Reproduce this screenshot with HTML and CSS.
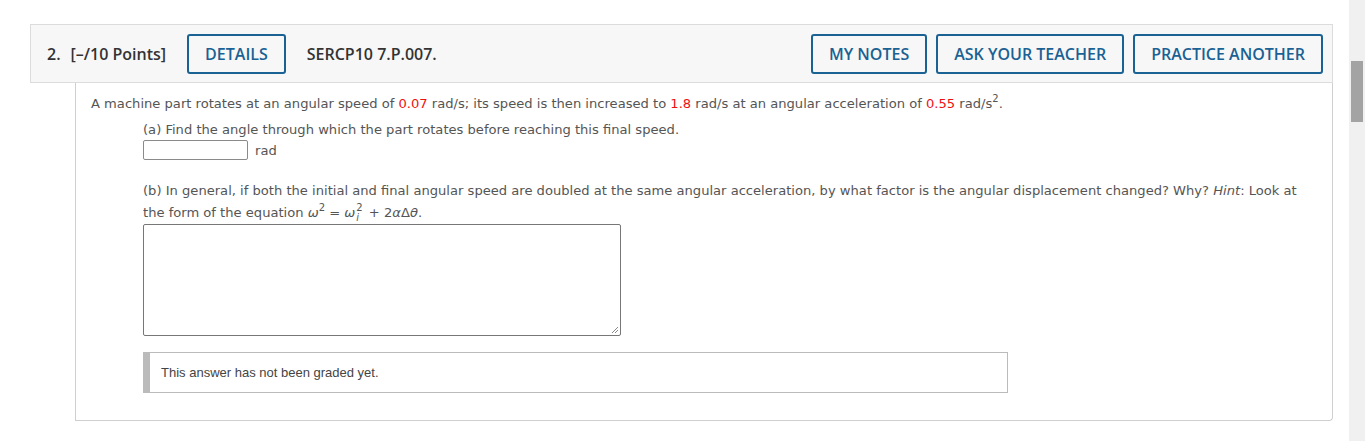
FILE: index.html
```html
<!DOCTYPE html>
<html>
<head>
<meta charset="utf-8">
<link rel="stylesheet" href="styles.css">
</head>
<body>
<div class="screen">
  <div class="main">
    <div class="question">
      <div class="qhead">
        <span class="qnum">2.</span>
        <span class="qpts">[–/10 Points]</span>
        <button class="btn btn-details">DETAILS</button>
        <span class="qcode">SERCP10 7.P.007.</span>
        <div class="qactions">
          <button class="btn">MY NOTES</button>
          <button class="btn">ASK YOUR TEACHER</button>
          <button class="btn">PRACTICE ANOTHER</button>
        </div>
      </div>
      <div class="qbody">
        <p class="stem">A machine part rotates at an angular speed of <span class="red">0.07</span> rad/s; its speed is then increased to <span class="red">1.8</span> rad/s at an angular acceleration of <span class="red">0.55</span> rad/s<sup>2</sup>.</p>
        <div class="part parta">
          <p class="ptext">(a) Find the angle through which the part rotates before reaching this final speed.</p>
          <div class="ansrow"><span class="ansbox"></span><span class="unit">rad</span></div>
        </div>
        <div class="part partb">
          <p class="ptext ptextb">(b) In general, if both the initial and final angular speed are doubled at the same angular acceleration, by what factor is the angular displacement changed? Why? <i>Hint</i>: Look at the form of the equation <i class="m">ω</i><sup>2</sup> = <i class="m">ω</i><span class="ss"><span class="ssp">2</span><span class="ssb"><i>i</i></span></span> + 2<i class="m">α</i>Δ<i class="m">θ</i>.</p>
          <div class="tarea"><svg class="grip" width="9" height="9" viewBox="0 0 9 9"><path d="M8 2 L2 8 M8 5 L5 8" stroke="#888" stroke-width="1"/></svg></div>
          <div class="graded">This answer has not been graded yet.</div>
        </div>
      </div>
    </div>
  </div>
  <div class="scrollbar"><div class="thumb"></div></div>
</div>
</body>
</html>
```
FILE: styles.css
```css
html, body { margin: 0; padding: 0; background: #fff; }
.screen { display: flex; width: 1365px; height: 441px; overflow: hidden; }
.main { width: 1349px; padding: 24px 0 0 30px; box-sizing: border-box; }
.question { width: 1303px; }
.qhead {
  height: 59px; box-sizing: border-box;
  border: 1px solid #dcdcdc; background: #f7f7f7;
  display: flex; align-items: center;
  padding: 0 9px 0 16px;
  font-family: "Open Sans", sans-serif; font-weight: 600; font-size: 16px; color: #333;
}
.qnum { margin-right: 10px; }
.qpts { margin-right: 21px; }
.qcode { margin-left: 21px; }
.btn {
  font-family: "Open Sans", sans-serif; font-weight: 600; font-size: 16px;
  color: #1a6194; background: #f7f7f7;
  border: 2px solid #1a6194; border-radius: 3px;
  height: 40px; padding: 0 16px; box-sizing: border-box;
}
.qactions { margin-left: auto; display: flex; gap: 9px; }
.qbody {
  margin-left: 45px; height: 338px; box-sizing: border-box;
  border: 1px solid #cfcfcf; border-top: none; border-radius: 0 0 4px 0;
  padding: 12px 0 0 15px;
  font-family: Verdana, "DejaVu Sans", sans-serif; font-size: 13.1px; color: #555;
}
p { margin: 0; }
.stem { line-height: 18px; }
sup { font-size: 10px; vertical-align: 6px; line-height: 0; }
.red { color: #ee1111; }
.part { margin-left: 52px; }
.parta { margin-top: 8px; }
.ptext { line-height: 18px; }
.ansrow { display: flex; align-items: center; margin-top: 1px; height: 20px; }
.ansbox { width: 105px; height: 20px; border: 1px solid #8a8a8a; border-radius: 2px; box-sizing: border-box; display: inline-block; }
.unit { margin-left: 7px; }
.partb { margin-top: 20px; padding-right: 30px; }
.ptextb { line-height: 22px; }
.m { font-style: italic; }
.ss { display: inline-block; vertical-align: -4px; line-height: 10px; font-size: 10px; margin-right: 2px; margin-left: 1px; }
.ssp, .ssb { display: block; }
.tarea {
  width: 478px; height: 112px; box-sizing: border-box;
  border: 1px solid #777; border-radius: 2px; position: relative; background: #fff;
}
.grip { position: absolute; right: 1px; bottom: 1px; }
.graded {
  margin-top: 16px; width: 865px; height: 41px; box-sizing: border-box;
  border: 1px solid #bbb; border-left: 7px solid #bbb;
  display: flex; align-items: center; padding-left: 11px;
  font-family: "Liberation Sans", Arial, sans-serif; font-size: 13px; color: #444;
}
.scrollbar { width: 16px; height: 441px; background: #f0f0f0; padding-top: 61px; box-sizing: border-box; }
.thumb { width: 12px; height: 61px; margin-left: 2px; background: #a3a3a3; }
```
